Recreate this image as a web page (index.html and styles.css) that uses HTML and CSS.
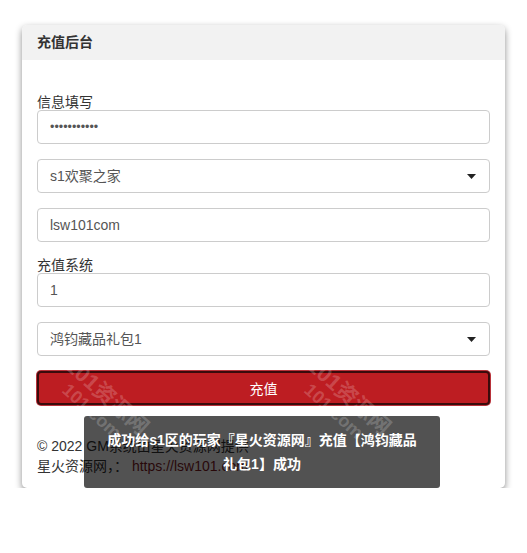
FILE: index.html
```html
<!DOCTYPE html>
<html lang="zh-CN">
<head>
<meta charset="utf-8">
<title>充值后台</title>
<link rel="stylesheet" href="styles.css">
</head>
<body>
<div class="page">
  <div class="card">
    <div class="card-head">充值后台</div>
    <div class="card-body">
      <label class="lbl">信息填写</label>
      <input class="ctl" type="password" value="lsw101.com1">
      <div class="ctl sel"><span>s1欢聚之家</span><svg class="caret" width="9" height="5" viewBox="0 0 9 5"><path d="M0 0H9L4.5 5Z" fill="#222"/></svg></div>
      <input class="ctl" type="text" value="lsw101com">
      <label class="lbl">充值系统</label>
      <input class="ctl" type="text" value="1">
      <div class="ctl sel"><span>鸿钧藏品礼包1</span><svg class="caret" width="9" height="5" viewBox="0 0 9 5"><path d="M0 0H9L4.5 5Z" fill="#222"/></svg></div>
      <button class="btn" type="button">充值</button>
      <div class="foot">
        <div>© 2022 GM系统由星火资源网提供</div>
        <div>星火资源网，： <a class="link" href="#">https://lsw101.com</a></div>
      </div>
    </div>
  </div>
</div>
<div class="toast">成功给s1区的玩家『星火资源网』充值【鸿钧藏品礼包1】成功</div>
<div class="wm wm-a"><div class="wm-1">101资源网</div><div class="wm-2">101.com</div></div>
<div class="wm wm-b"><div class="wm-1">101资源网</div><div class="wm-2">101.com</div></div>
</body>
</html>
```

FILE: styles.css
```css
* { box-sizing: border-box; }
html, body { margin: 0; padding: 0; background: #fff; }
body {
  font-family: "Liberation Sans", "Noto Sans CJK SC", sans-serif;
  font-size: 14px;
  color: #333;
}
.page { padding: 25px 22px 0 22px; }
.card {
  width: 483px;
  background: #fff;
  border-radius: 5px;
  box-shadow: 0 3px 7px rgba(0,0,0,0.45);
}
.card-head {
  height: 35px;
  line-height: 35px;
  padding-left: 15px;
  background: #f2f2f2;
  font-weight: bold;
  font-size: 14px;
  color: #333;
  border-radius: 5px 5px 0 0;
}
.card-body {
  display: flex;
  flex-direction: column;
  padding: 34px 15px 12px 15px;
}
.lbl {
  display: block;
  line-height: 16px;
  height: 16px;
  font-size: 14px;
  color: #333;
}
.ctl {
  display: block;
  width: 453px;
  height: 34px;
  margin: 0 0 15px 0;
  padding: 6px 12px;
  border: 1px solid #ccc;
  border-radius: 4px;
  background: #fff;
  font-family: "Liberation Sans", "Noto Sans CJK SC", sans-serif;
  font-size: 14px;
  color: #555;
  outline: none;
}
input[type="password"].ctl { font-size: 12.5px; letter-spacing: 0; color: #555; }
.sel {
  display: flex;
  align-items: center;
  justify-content: space-between;
  padding-right: 13px;
  line-height: 20px;
}
.caret { display: block; }
.btn {
  display: block;
  width: 453px;
  height: 34px;
  margin: 0;
  padding: 0;
  background: #bd1d22;
  border: 2px solid #3a0b0c;
  border-radius: 4px;
  box-shadow: 0 0 0 1px #b8323a;
  color: #fff;
  font-family: "Liberation Sans", "Noto Sans CJK SC", sans-serif;
  font-size: 14px;
  cursor: pointer;
}
.foot {
  margin-top: 31px;
  line-height: 20px;
  font-size: 14px;
  color: #333;
}
.link { color: #7e1a1e; text-decoration: none; }
.toast {
  position: absolute;
  left: 84px;
  top: 416px;
  width: 356px;
  padding: 12px 20px;
  background: rgba(0,0,0,0.68);
  color: #fff;
  border-radius: 3px;
  font-size: 14px;
  font-weight: bold;
  line-height: 24px;
  text-align: center;
  z-index: 5;
}
.wm {
  position: absolute;
  pointer-events: none;
  transform-origin: 0 0;
  transform: rotate(42deg);
  color: rgba(255,255,255,0.2);
  font-weight: bold;
  white-space: nowrap;
  z-index: 10;
}
.wm-a { left: 76px; top: 354px; }
.wm-b { left: 318px; top: 354px; }
.wm-1 { font-size: 22px; line-height: 22px; }
.wm-2 { font-size: 18px; line-height: 20px; padding-left: 14px; }
```
